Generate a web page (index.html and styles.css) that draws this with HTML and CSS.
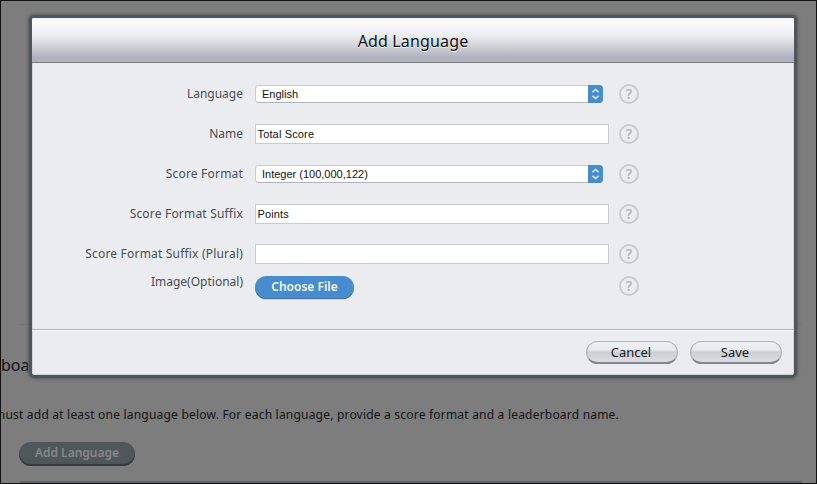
FILE: index.html
```
<!DOCTYPE html>
<html lang="en">
<head>
<meta charset="utf-8">
<title>Add Language</title>
<link rel="stylesheet" href="styles.css">
</head>
<body>
<svg class="defs" width="0" height="0" aria-hidden="true">
  <symbol id="arrows" viewBox="0 0 15 18"><path d="M4.5 7.2 7.5 4.3l3 2.9M4.5 10.8l3 2.9 3-2.9" fill="none" stroke="#fff" stroke-width="1.3"/></symbol>
</svg>
<main class="page">
  <div class="section-rule"></div>
  <h2 class="page-heading">board</h2>
  <p class="page-copy">must add at least one language below. For each language, provide a score format and a leaderboard name.</p>
  <button class="add-button">Add Language</button>
  <div class="bottom-rule"></div>
</main>
<section class="dialog" role="dialog" aria-labelledby="title">
  <header class="dialog-header"><h1 class="dialog-title" id="title">Add Language</h1></header>
  <div class="form">
    <div class="row"><label class="label">Language</label><div class="control"><div class="select"><span class="value">English</span><svg class="arrows"><use href="#arrows"/></svg></div></div><span class="help">?</span></div>
    <div class="row"><label class="label">Name</label><div class="control"><div class="input">Total Score</div></div><span class="help">?</span></div>
    <div class="row"><label class="label label-wide">Score Format</label><div class="control"><div class="select"><span class="value">Integer (100,000,122)</span><svg class="arrows"><use href="#arrows"/></svg></div></div><span class="help">?</span></div>
    <div class="row"><label class="label label-wide">Score Format Suffix</label><div class="control"><div class="input">Points</div></div><span class="help">?</span></div>
    <div class="row"><label class="label label-wide">Score Format Suffix (Plural)</label><div class="control"><div class="input"></div></div><span class="help">?</span></div>
    <div class="row image-row"><label class="label">Image(Optional)</label><div class="control"><button class="file-button">Choose File</button></div><span class="help">?</span></div>
  </div>
  <footer class="dialog-footer"><button class="button">Cancel</button><button class="button">Save</button></footer>
</section>
</body>
</html>
```

FILE: styles.css
```
* { box-sizing: border-box; }
body {
  margin: 0;
  width: 817px;
  height: 484px;
  overflow: hidden;
  background: #7d7d7d;
  font-family: "Noto Sans", "Open Sans", sans-serif;
}
button { font-family: inherit; padding: 0; margin: 0; }
.defs { position: absolute; }
.page {
  width: 817px;
  height: 484px;
  border: 1px solid #111;
  overflow: hidden;
  color: #111316;
}
.section-rule { height: 1px; margin: 323px 14px 0 19px; background: #747678; }
.page-heading {
  margin: 28px 0 0;
  font-size: 16px;
  line-height: 24px;
  font-weight: 400;
}
.page-copy {
  margin: 27px 0 0 -7px;
  font-size: 12px;
  line-height: 22px;
  letter-spacing: 0.205px;
  white-space: nowrap;
}
.add-button {
  display: block;
  width: 116px;
  height: 24px;
  margin: 16px 0 0 18px;
  border: 0;
  border-radius: 12px;
  background: #50575b;
  box-shadow: inset 0 -2px 1px #34393d;
  color: #858789;
  font-size: 12px;
  font-weight: 600;
  line-height: 20px;
  padding-bottom: 3px;
}
.bottom-rule { height: 2px; margin: 15px 14px 0 19px; background: #5e6467; }
.dialog {
  position: absolute;
  left: 32px;
  top: 18px;
  width: 762px;
  height: 357px;
  display: flex;
  flex-direction: column;
  background: #ebecf0;
  border-radius: 2px 2px 3px 3px;
  box-shadow: inset 0 0 0 1px #d0d2d6, 0 0 0 3px #50575b, 0 0 3px 4px #575d60;
}
.dialog-header {
  height: 45px;
  border-bottom: 1px solid #777a7e;
  border-radius: 2px 2px 0 0;
  background: linear-gradient(#f1f2f5 0, #fbfbfc 8%, #ebecf0 40%, #cccdd2 68%, #aeb1be 90%, #aeb1be);
  text-align: center;
}
.dialog-title {
  margin: 0;
  font-size: 16px;
  font-weight: 400;
  line-height: 46px;
  letter-spacing: 0.15px;
  color: #111316;
  text-shadow: 0 1px 0 #f5f5f7;
}
.form { flex: 1; padding-top: 11px; }
.row {
  display: grid;
  grid-template-columns: 211px 354px 20px;
  height: 40px;
  align-items: center;
}
.label {
  margin-top: -1px;
  text-align: right;
  font-size: 12px;
  line-height: 18px;
  color: #484d52;
  white-space: nowrap;
}
.label-wide { letter-spacing: 0.19px; }
.control { margin-left: 12px; margin-right: -12px; }
.help {
  margin-left: 22px;
  width: 20px;
  height: 20px;
  border: 2px solid #c9cad0;
  border-radius: 50%;
  text-align: center;
  font-size: 14px;
  line-height: 16px;
  font-weight: 600;
  color: #b2b5c0;
}
.input {
  height: 20px;
  margin-top: -1px;
  border: 1px solid #c9cad2;
  background: #fff;
  padding-left: 1.5px;
  font: 11px/18px "Liberation Sans", Arial, sans-serif;
  letter-spacing: 0.15px;
  color: #111;
}
.select {
  display: flex;
  justify-content: space-between;
  width: 348px;
  height: 18px;
  border: 1px solid #c9cad2;
  border-bottom-color: #aeb1be;
  border-right: 0;
  border-radius: 4px;
  background: #fff;
  padding-left: 6px;
  font: 11px/17px "Liberation Sans", Arial, sans-serif;
  color: #111;
}
.arrows {
  flex: none;
  width: 15px;
  height: 18px;
  margin-top: -1px;
  border-radius: 0 4px 4px 0;
  background: #468ccf;
}
.image-row { height: 24px; align-items: start; }
.image-row .label { margin-top: -1px; }
.image-row .help { margin-top: 2px; }
.image-row .control { padding-top: 2px; }
.file-button {
  display: block;
  width: 99px;
  height: 23px;
  border: 0;
  border-radius: 12px;
  background: #468ccf;
  box-shadow: inset 0 -1px 0 #4a7199, 0 1px 0 #cfd1d6;
  color: #f5f6f8;
  font-size: 12px;
  line-height: 20px;
  padding-bottom: 2px;
  font-weight: 600;
}
.dialog-footer {
  height: 46px;
  border-top: 1px solid #aeb1b8;
  box-shadow: inset 0 1px 0 #fafafb;
  display: flex;
  justify-content: flex-end;
  gap: 12px;
  padding: 11px 12px 0 0;
}
.button {
  width: 92px;
  height: 23px;
  border: 1px solid #b2b4bd;
  border-bottom: 2px solid #85878e;
  border-radius: 12px;
  background: linear-gradient(#f0f1f4 0, #e9eaee 38%, #cdced3 52%, #dcdde1 100%);
  color: #17191c;
  font-size: 13px;
  line-height: 20px;
  padding-right: 2px;
}
```
